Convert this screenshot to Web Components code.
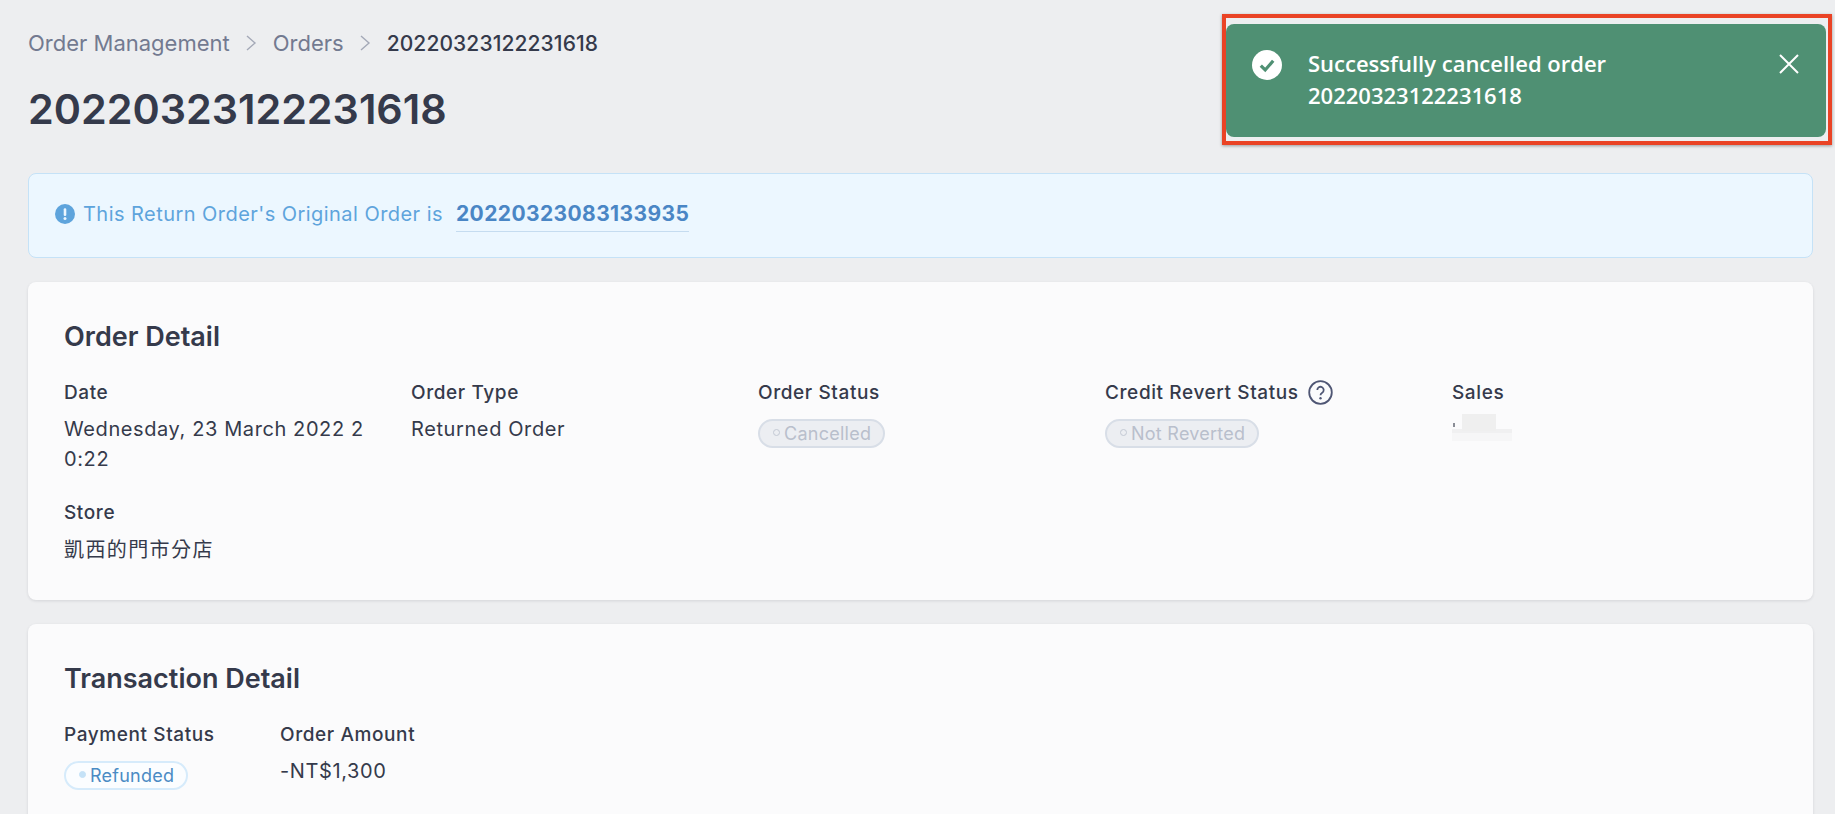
<!DOCTYPE html>
<html>
<head>
<meta charset="utf-8">
<style>
html, body { margin: 0; padding: 0; height: 814px; overflow: hidden; background: #edeef0; }
body { font-family: Inter, "Noto Sans CJK TC", sans-serif; color: #353a4b; }
</style>
</head>
<body>
<order-page></order-page>

<script>
class BreadCrumbs extends HTMLElement {
    constructor() {
        super();
        this.attachShadow({ mode: 'open' });
        this.shadowRoot.innerHTML = `
<style>
:host { display: flex; align-items: center; height: 30px; font-size: 22px; color: #737a90; }
.sep { width: 12px; height: 18px; margin: 0 16px 0 15px; }
.current { color: #353a4b; font-weight: 500; font-size: 21px; letter-spacing: .1px; }
</style>
<span>Order Management</span>
<svg class="sep" viewBox="0 0 12 18"><path d="M2 2l8 7-8 7" fill="none" stroke="#a4a9b7" stroke-width="1.4"/></svg>
<span>Orders</span>
<svg class="sep" viewBox="0 0 12 18"><path d="M2 2l8 7-8 7" fill="none" stroke="#a4a9b7" stroke-width="1.4"/></svg>
<span class="current">20220323122231618</span>`;
    }
}

class InfoAlert extends HTMLElement {
    constructor() {
        super();
        this.attachShadow({ mode: 'open' });
        this.shadowRoot.innerHTML = `
<style>
:host { display: flex; align-items: center; gap: 8px; height: 85px; box-sizing: border-box; padding: 0 26px 4px; background: #ecf7ff; border: 1px solid #c5e2f7; border-radius: 8px; font-size: 20px; letter-spacing: .45px; color: #5ea4dc; }
svg { width: 20px; height: 20px; flex: none; }
a { margin-left: 5px; padding: 6px 0 5px; border-bottom: 1px solid #c5dcf0; color: #4a86c5; font-size: 21px; font-weight: 700; letter-spacing: .4px; }
</style>
<svg viewBox="0 0 20 20"><circle cx="10" cy="10" r="10" fill="#5ea4dc"/><rect x="8.7" y="4.2" width="2.6" height="7.8" rx="1.2" fill="#ecf7ff"/><circle cx="10" cy="14.6" r="1.5" fill="#ecf7ff"/></svg>
<span><slot></slot></span>
<a><slot name="link"></slot></a>`;
    }
}

class DetailCard extends HTMLElement {
    constructor() {
        super();
        this.attachShadow({ mode: 'open' });
        this.shadowRoot.innerHTML = `
<style>
:host { display: block; box-sizing: border-box; padding: 39px 36px 36px; background: #fbfbfc; border-radius: 8px; box-shadow: 0 1px 3px rgba(40, 45, 60, .12); }
h2 { margin: 0 0 27px; font-size: 27px; line-height: 32px; font-weight: 600; color: #353a4b; }
.grid { display: grid; grid-template-columns: var(--cols, repeat(5, 305px)); column-gap: var(--gap, 42px); row-gap: 26px; }
</style>
<h2></h2>
<div class="grid"><slot></slot></div>`;
    }
    connectedCallback() {
        this.shadowRoot.querySelector('h2').textContent = this.getAttribute('heading');
    }
}

class DetailField extends HTMLElement {
    constructor() {
        super();
        this.attachShadow({ mode: 'open' });
        this.shadowRoot.innerHTML = `
<style>
:host { display: block; min-width: 0; }
.label { display: flex; align-items: center; gap: 9px; height: 24px; font-size: 19px; font-weight: 500; letter-spacing: .6px; color: #353a4b; }
.value { margin-top: 10px; font-size: 20px; line-height: 30px; letter-spacing: .6px; word-break: break-all; color: #353a4b; }
</style>
<div class="label"><span class="text"></span><slot name="hint"></slot></div>
<div class="value"><slot></slot></div>`;
    }
    connectedCallback() {
        this.shadowRoot.querySelector('.text').textContent = this.getAttribute('label');
    }
}

class StatusPill extends HTMLElement {
    constructor() {
        super();
        this.attachShadow({ mode: 'open' });
        this.shadowRoot.innerHTML = `
<style>
:host { display: inline-flex; align-items: center; gap: 4px; height: 29px; margin-top: 5px; box-sizing: border-box; padding: 0 12px 0 13px; border-radius: 15px; vertical-align: top; font-size: 18px; letter-spacing: .25px; border: 2px solid #d8dee7; background: #eceef2; color: #b9bfcc; }
:host([tone="info"]) { border-color: #d6ebfb; background: #fbfdff; color: #4a8bc4; }
.dot { width: 7px; height: 7px; box-sizing: border-box; border-radius: 50%; border: 1px solid #c3c9d4; margin-top: -3px; }
:host([tone="info"]) .dot { background: #c5e2f7; border-color: #c5e2f7; }
</style>
<span class="dot"></span><slot></slot>`;
    }
}

class ToastMessage extends HTMLElement {
    constructor() {
        super();
        this.attachShadow({ mode: 'open' });
        this.shadowRoot.innerHTML = `
<style>
:host { position: absolute; top: 14px; left: 1222px; width: 610px; height: 131px; box-sizing: border-box; border: 4px solid #ea4325; box-shadow: 0 1px 3px rgba(0,0,0,.35); }
.body { position: absolute; top: 6px; left: 0; right: 2px; bottom: 4px; display: flex; align-items: flex-start; box-sizing: border-box; padding: 23px 26px 0 26px; border-radius: 8px; background: #4f9073; color: #fff; font-family: "Open Sans", sans-serif; font-size: 22px; font-weight: 600; line-height: 32px; }
.check { width: 30px; height: 30px; flex: none; margin: 3px 26px 0 0; }
.msg { flex: 1; }
.close { width: 22px; height: 22px; flex: none; margin-top: 6px; }
</style>
<div class="body">
<svg class="check" viewBox="0 0 30 30"><circle cx="15" cy="15" r="15" fill="#fff"/><path d="M8.8 15.6l4.4 4.4 8-9.2" fill="none" stroke="#4f9073" stroke-width="3.2"/></svg>
<div class="msg"><slot></slot></div>
<svg class="close" viewBox="0 0 22 22"><path d="M2 2l18 18M20 2L2 20" stroke="#fff" stroke-width="2" fill="none"/></svg>
</div>`;
    }
}

class OrderPage extends HTMLElement {
    constructor() {
        super();
        this.attachShadow({ mode: 'open' });
        this.shadowRoot.innerHTML = `
<style>
:host { display: block; height: 814px; box-sizing: border-box; padding: 28px 22px 0 28px; overflow: hidden; }
h1 { margin: 23px 0 0; font-size: 41.3px; line-height: 56px; font-weight: 600; color: #353a4b; }
info-alert { margin-top: 36px; }
.first { margin-top: 24px; height: 318px; }
.second { margin-top: 24px; --cols: 184px 1fr; --gap: 32px; height: 300px; }
.cjk { font-family: "Noto Sans CJK TC", sans-serif; letter-spacing: 1.4px; }
.smudge { position: relative; display: block; width: 60px; height: 27px; background: linear-gradient(#fbfbfc 0 55%, #f0f0f1 55% 70%, #f6f6f7 70%); }
.smudge::before { content: ''; position: absolute; left: 10px; top: 0; width: 34px; height: 17px; background: #efefef; }
.smudge::after { content: ''; position: absolute; left: 1px; top: 9px; width: 2px; height: 4px; background: #8a8d96; }
</style>
<bread-crumbs></bread-crumbs>
<h1>20220323122231618</h1>
<info-alert>This Return Order's Original Order is<span slot="link">20220323083133935</span></info-alert>
<detail-card class="first" heading="Order Detail">
    <detail-field label="Date">Wednesday, 23 March 2022 20:22</detail-field>
    <detail-field label="Order Type">Returned Order</detail-field>
    <detail-field label="Order Status"><status-pill>Cancelled</status-pill></detail-field>
    <detail-field label="Credit Revert Status">
        <svg slot="hint" width="25" height="25" viewBox="0 0 25 25"><circle cx="12.5" cy="12.5" r="11.3" fill="none" stroke="#4f5674" stroke-width="1.8"/><path d="M9.3 10a3.2 3.2 0 1 1 4.9 2.7c-1.1.7-1.7 1.3-1.7 2.6" fill="none" stroke="#4f5674" stroke-width="1.8"/><circle cx="12.5" cy="18.3" r="1.2" fill="#4f5674"/></svg>
        <status-pill>Not Reverted</status-pill>
    </detail-field>
    <detail-field label="Sales"><span class="smudge"></span></detail-field>
    <detail-field label="Store"><span class="cjk">凱西的門市分店</span></detail-field>
</detail-card>
<detail-card class="second" heading="Transaction Detail">
    <detail-field label="Payment Status"><status-pill tone="info">Refunded</status-pill></detail-field>
    <detail-field label="Order Amount">-NT$1,300</detail-field>
</detail-card>
<toast-message>Successfully cancelled order<br>20220323122231618</toast-message>`;
    }
}

customElements.define('bread-crumbs', BreadCrumbs);
customElements.define('info-alert', InfoAlert);
customElements.define('detail-card', DetailCard);
customElements.define('detail-field', DetailField);
customElements.define('status-pill', StatusPill);
customElements.define('toast-message', ToastMessage);
customElements.define('order-page', OrderPage);
</script>
</body>
</html>
